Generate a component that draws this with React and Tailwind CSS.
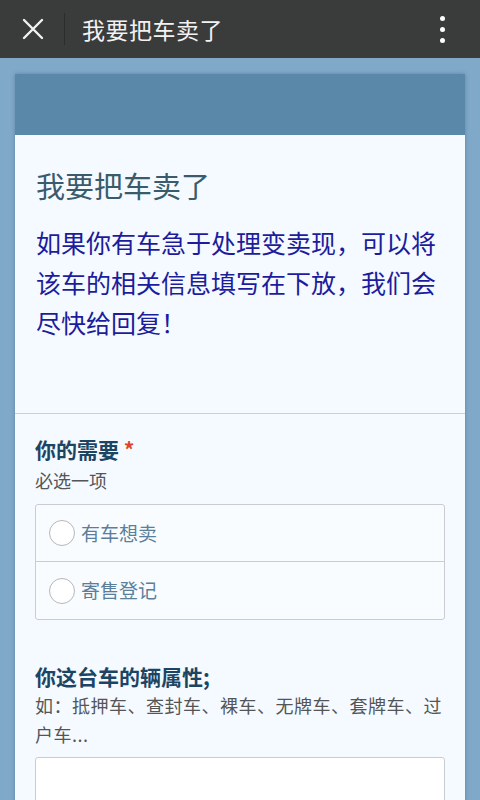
import {useState} from "react";

const font = {fontFamily: '"Noto Sans CJK SC", "Noto Sans", sans-serif'};

function TopBar() {
    return (
        <div className="h-[58px] bg-[#3a3b3b] flex items-center text-[#f2f2f2]">
            <div className="w-[64px] flex justify-center pl-[1px]">
                <svg width="22" height="22" viewBox="0 0 22 22" stroke="#f2f2f2" strokeWidth="2.4" strokeLinecap="round">
                    <path d="M2 2 L20 20 M20 2 L2 20"/>
                </svg>
            </div>
            <div className="w-px h-[32px] bg-[#2b2c2c]"/>
            <div className="flex-1 pl-[17px] text-[23px] tracking-[0.5px]">我要把车卖了</div>
            <div className="w-[76px] flex flex-col items-center gap-[6px]">
                <span className="w-[5px] h-[5px] rounded-full bg-white"/>
                <span className="w-[5px] h-[5px] rounded-full bg-white"/>
                <span className="w-[5px] h-[5px] rounded-full bg-white"/>
            </div>
        </div>
    )
}

function Radio({label, last}) {
    return (
        <label className={`flex items-center h-[57px] px-[13px] gap-[6px] ${last ? '' : 'border-b border-[#c9cdd1]'}`}>
            <span className="w-[26px] h-[26px] rounded-full border-[1.5px] border-[#b4b8bc] bg-white"/>
            <span className="text-[19px] text-[#5b7f9b]">{label}</span>
        </label>
    )
}

export default function App() {
    const [text, setText] = useState("");

    return (
        <div className="h-[800px] overflow-hidden bg-[#80a8c8]" style={font}>
            <TopBar/>
            <div className="px-[15px] pt-[16px]">
                <div className="bg-[#f4faff] shadow-[0_0_4px_rgba(40,70,100,0.35)]">
                    <div className="h-[61px] bg-[#5a88a8]"/>

                    {/* intro */}
                    <div className="px-[21px] pt-[30px] pb-[71px] border-b border-[#c4d2dc]">
                        <h1 className="text-[29px] leading-[40px] text-[#3a5b6b]">我要把车卖了</h1>
                        <p className="mt-[17px] text-[25px] leading-[40px] text-[#1c1c9c]">
                            如果你有车急于处理变卖现，可以将该车的相关信息填写在下放，我们会尽快给回复！
                        </p>
                    </div>

                    {/* question 1 */}
                    <div className="px-[20px] pt-[21px]">
                        <div className="text-[21px] leading-[28px] font-bold text-[#1c4563]">
                            你的需要 <span className="text-[#e0452c]">*</span>
                        </div>
                        <div className="mt-[4px] text-[18px] leading-[26px] text-[#555]">必选一项</div>
                        <div className="mt-[11px] border border-[#c9cdd1] rounded-[3px] bg-[#f8fcff]">
                            <Radio label="有车想卖"/>
                            <Radio label="寄售登记" last/>
                        </div>
                    </div>

                    {/* question 2 */}
                    <div className="px-[20px] pt-[42px] pb-[40px]">
                        <div className="text-[21px] leading-[28px] font-bold text-[#1c4563]">你这台车的辆属性;</div>
                        <div className="mt-[1px] text-[18px] leading-[29px] tracking-[0.5px] text-[#555]">
                            如：抵押车、查封车、裸车、无牌车、套牌车、过户车...
                        </div>
                        <textarea
                            value={text}
                            onChange={e => setText(e.target.value)}
                            className="mt-[8px] block w-full h-[100px] border border-[#c9cdd1] rounded-[3px] bg-white"
                        />
                    </div>
                </div>
            </div>
        </div>
    )
}
